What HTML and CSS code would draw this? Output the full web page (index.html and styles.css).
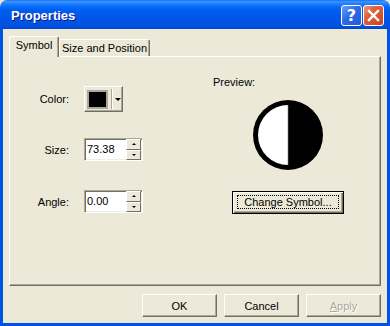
FILE: index.html
```html
<!DOCTYPE html>
<html lang="en">

<head>
  <meta charset="UTF-8" />
  <title>Properties</title>
  <link rel="stylesheet" href="styles.css">
</head>

<body>
  <div class="window">
    <div class="titlebar">
      <span class="title">Properties</span>
      <div class="caption">
        <button class="cap help">?</button>
        <button class="cap close">
          <svg width="13" height="13" viewBox="0 0 13 13">
            <path d="M2 2 L11 11 M11 2 L2 11" stroke="#fff" stroke-width="2.4" stroke-linecap="square" />
          </svg>
        </button>
      </div>
    </div>

    <div class="client">
      <div class="tabs">
        <div class="tab active">Symbol</div>
        <div class="tab">Size and Position</div>
      </div>

      <div class="panel">
        <div class="fields">
          <div class="row row-color">
            <label>Color:</label>
            <button class="color-btn">
              <span class="swatch"></span>
              <span class="sep"></span>
              <span class="arrow"></span>
            </button>
          </div>

          <div class="row row-size">
            <label>Size:</label>
            <div class="spin">
              <span class="value">73.38</span>
              <div class="spin-btns">
                <span class="up"></span>
                <span class="down"></span>
              </div>
            </div>
          </div>

          <div class="row row-angle">
            <label>Angle:</label>
            <div class="spin">
              <span class="value">0.00</span>
              <div class="spin-btns">
                <span class="up"></span>
                <span class="down"></span>
              </div>
            </div>
          </div>
        </div>

        <div class="preview">
          <div class="preview-label">Preview:</div>
          <svg class="symbol" width="70" height="70" viewBox="0 0 70 70">
            <circle cx="35" cy="35" r="35" fill="#000" />
            <path d="M35 5 A30 30 0 0 0 35 65 Z" fill="#fff" />
            <line x1="35" y1="5" x2="35" y2="65" stroke="#888" stroke-width="0.6" />
          </svg>
          <button class="btn default"><span class="focus">Change Symbol...</span></button>
        </div>
      </div>

      <div class="actions">
        <button class="btn">OK</button>
        <button class="btn">Cancel</button>
        <button class="btn disabled"><u>A</u>pply</button>
      </div>
    </div>
  </div>
</body>

</html>
```

FILE: styles.css
```css
* {
  box-sizing: border-box;
  margin: 0;
  padding: 0;
  font-family: 'Liberation Sans', Arial, sans-serif;
  font-size: 11px;
}

body {
  background: #ece9d8;
}

.window {
  width: 390px;
  height: 326px;
  display: flex;
  flex-direction: column;
}

/* title bar */
.titlebar {
  height: 29px;
  flex-shrink: 0;
  display: flex;
  align-items: center;
  justify-content: space-between;
  padding: 2px 6px 0 11px;
  border-radius: 7px 7px 0 0;
  background: linear-gradient(#0a5ae6 0, #3d95ff 1px, #2a88ff 3px, #0870fc 6px, #005ef0 10px, #0055e9 18px, #0053e4 24px, #004fdc 27px, #0046cc 29px);
}

.title {
  color: #fff;
  font-size: 13px;
  font-weight: bold;
  text-shadow: 1px 1px 0 #0a1c8a;
}

.caption {
  display: flex;
  gap: 1px;
}

.cap {
  width: 21px;
  height: 21px;
  border: 1px solid #fff;
  border-radius: 3px;
  display: flex;
  align-items: center;
  justify-content: center;
  color: #fff;
}

.help {
  background: linear-gradient(135deg, #6d9ef6 0%, #2d6ae6 45%, #225cd8 100%);
  font-size: 16px;
  font-weight: bold;
  font-family: 'DejaVu Sans', sans-serif;
}

.close {
  background: linear-gradient(135deg, #ec9a80 0%, #e2603c 35%, #c9431c 100%);
}

/* client area */
.client {
  flex: 1;
  display: flex;
  flex-direction: column;
  background: #ece9d8;
  border: 3px solid #0054e3;
  border-top: 0;
  padding: 7px 6px 6px;
}

.tabs {
  height: 20px;
  display: flex;
  align-items: flex-end;
}

.tab {
  height: 17px;
  padding-top: 2px;
  line-height: 13px;
  text-align: center;
  border-top: 1px solid #fff;
  border-left: 1px solid #fff;
  border-right: 1px solid #716f64;
  box-shadow: inset -1px 0 0 #aca899;
  border-radius: 2px 2px 0 0;
  width: 91px;
}

.tab.active {
  width: 50px;
  height: 21px;
  margin-bottom: -1px;
  position: relative;
  z-index: 1;
  background: #ece9d8;
}

.panel {
  height: 230px;
  display: grid;
  grid-template-columns: 203px 150px;
  border-top: 1px solid #fff;
  border-left: 1px solid #fff;
  border-right: 1px solid #716f64;
  border-bottom: 1px solid #716f64;
  box-shadow: inset -1px -1px 0 #aca899;
}

/* fields */
.row {
  display: flex;
  align-items: center;
}

.row label {
  width: 59px;
  margin-right: 15px;
  text-align: right;
}

.row-color {
  margin-top: 29px;
}

.row-size {
  margin-top: 26px;
}

.row-angle {
  margin-top: 29px;
}

.color-btn {
  width: 39px;
  height: 26px;
  display: flex;
  align-items: center;
  padding-left: 2px;
  background: #ece9d8;
  border: 1px solid;
  border-color: #fff #716f64 #716f64 #fff;
  box-shadow: inset -1px -1px 0 #aca899;
}

.swatch {
  width: 21px;
  height: 19px;
  background: #000;
  border: 2px solid #aca899;
}

.sep {
  width: 2px;
  height: 20px;
  margin-left: 3px;
  border-left: 1px solid #aca899;
  border-right: 1px solid #fff;
}

.arrow {
  margin-left: 2px;
  width: 0;
  height: 0;
  border-left: 3px solid transparent;
  border-right: 3px solid transparent;
  border-top: 3px solid #000;
}

.spin {
  width: 59px;
  height: 23px;
  display: flex;
  align-items: center;
  justify-content: space-between;
  background: #fff;
  border: 1px solid;
  border-color: #aca899 #fff #fff #aca899;
  box-shadow: inset 1px 1px 0 #716f64, inset -1px -1px 0 #f1efe2;
  padding: 1px 1px 1px 2px;
}

.value {
  line-height: 13px;
  padding-bottom: 1px;
}

.spin-btns {
  width: 15px;
  height: 21px;
  display: flex;
  flex-direction: column;
}

.spin-btns span {
  flex: 1;
  display: flex;
  align-items: center;
  justify-content: center;
  background: #ece9d8;
  border: 1px solid;
  border-color: #fff #716f64 #716f64 #fff;
}

.spin-btns span::after {
  content: "";
  width: 0;
  height: 0;
  border-left: 2px solid transparent;
  border-right: 2px solid transparent;
}

.spin-btns .up::after {
  border-bottom: 2px solid #000;
}

.spin-btns .down::after {
  border-top: 2px solid #000;
}

/* preview */
.preview {
  display: flex;
  flex-direction: column;
  align-items: center;
}

.preview-label {
  align-self: flex-start;
  margin-top: 19px;
  line-height: 13px;
}

.symbol {
  margin-top: 11px;
}

/* buttons */
.btn {
  width: 75px;
  height: 23px;
  background: #ece9d8;
  color: #000;
  border: 1px solid;
  border-color: #fff #716f64 #716f64 #fff;
  box-shadow: inset -1px -1px 0 #aca899;
}

.btn.default {
  width: 112px;
  margin-top: 21px;
  border: 1px solid #000;
  box-shadow: inset 1px 1px 0 #fff, inset -1px -1px 0 #716f64, inset -2px -2px 0 #aca899;
  padding: 3px 4px 4px 4px;
  display: flex;
}

.focus {
  flex: 1;
  border: 1px dotted #000;
  line-height: 13px;
}

.btn.disabled {
  color: #aca899;
  text-shadow: 1px 1px 0 #fff;
}

.actions {
  margin-top: 8px;
  display: flex;
  justify-content: flex-end;
  gap: 7px;
}
```
